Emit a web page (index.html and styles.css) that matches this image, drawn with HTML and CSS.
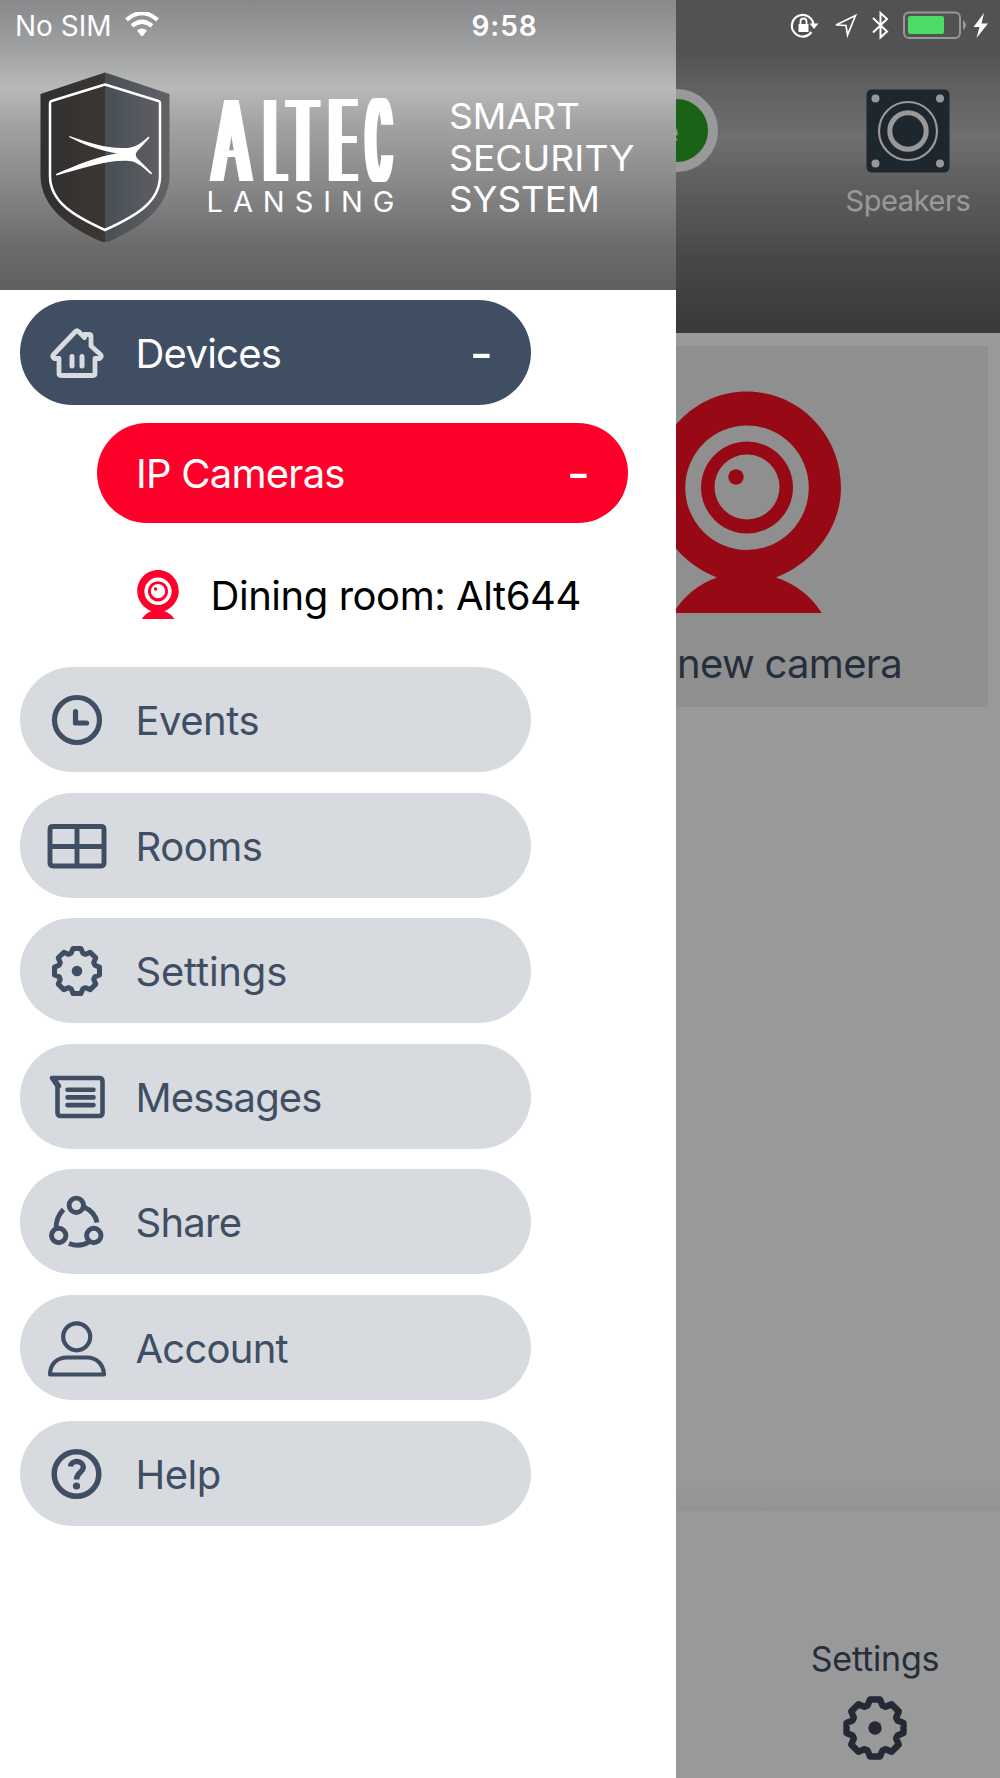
FILE: index.html
```html
<!DOCTYPE html>
<html lang="en">
<head>
<meta charset="utf-8">
<title>Altec Lansing Smart Security System</title>
<link rel="stylesheet" href="styles.css">
</head>
<body>
<svg class="defs" aria-hidden="true">
  <symbol id="camera" viewBox="653 391 188 222">
    <path fill-rule="evenodd" d="M747 391.500c52 0 94 43 94 96 0 40-27 75-65 90 19 6 36 19 46 36H673c10-17 26-30 44-36-38-15-64-50-64-90 0-53 42-96 94-96zM747 425.500a61.500 62 0 1 0 0 124.500 61.500 62 0 1 0 0-124.500zM747 441.500a46 46 0 1 1 0 92 46 46 0 1 1 0-92zM747 454.500a32.500 32.500 0 1 0 0 65 32.500 32.500 0 1 0 0-65z"/>
    <circle cx="736" cy="477" r="7.700"/>
  </symbol>
  <symbol id="gear" viewBox="-32 -32 64 64">
    <path fill="none" stroke="currentColor" stroke-width="6.500" stroke-linejoin="round" d="M-7.500-22.500L-5-28.500H5L7.500-22.500 10.600-21.200 16.600-23.700 23.700-16.600 21.200-10.600 22.500-7.500 28.500-5V5L22.500 7.500 21.200 10.600 23.700 16.600 16.600 23.700 10.600 21.200 7.500 22.500 5 28.500H-5L-7.500 22.500-10.600 21.200-16.600 23.700-23.700 16.600-21.200 10.600-22.500 7.500-28.500 5V-5L-22.500-7.500-21.200-10.600-23.700-16.600-16.600-23.700-10.600-21.200Z"/>
    <circle r="6.700" fill="currentColor"/>
  </symbol>
</svg>

<div class="screen">
  <div class="app">
    <header class="app-header">
      <div class="live">Live</div>
      <div class="speakers">
        <svg width="84" height="84" viewBox="0 0 84 84">
          <rect x=".5" y=".5" width="83" height="83" rx="5" fill="#32404e"/>
          <g fill="#fff"><circle cx="9.500" cy="9.500" r="4"/><circle cx="74" cy="9.500" r="4"/><circle cx="9.500" cy="74.500" r="4"/><circle cx="74" cy="74.500" r="4"/></g>
          <g fill="none" stroke="#fff"><circle cx="42" cy="42" r="29" stroke-width="2.200"/><circle cx="42" cy="42" r="18.200" stroke-width="5"/></g>
        </svg>
        <span class="speakers-label">Speakers</span>
      </div>
    </header>
    <main class="app-main">
      <section class="card">
        <svg class="card-camera" width="188" height="222"><use href="#camera"/></svg>
        <span class="card-label">Add new camera</span>
      </section>
    </main>
    <footer class="app-footer">
      <div class="tab tab-left"><span>Events</span></div>
      <div class="tab">
        <span>Settings</span>
        <svg class="tab-gear" width="64" height="64"><use href="#gear"/></svg>
      </div>
    </footer>
  </div>
  <div class="scrim"></div>

  <aside class="drawer">
    <header class="drawer-header">
      <svg class="brand" width="600" height="172" viewBox="40 72 600 172">
        <defs>
          <linearGradient id="left"><stop stop-color="#303030"/><stop offset="1" stop-color="#3b3633"/></linearGradient>
          <linearGradient id="right"><stop stop-color="#464f55"/><stop offset="1" stop-color="#636166"/></linearGradient>
          <filter id="widen" x="-10%" y="-10%" width="120%" height="120%"><feMorphology operator="dilate" radius="5 0"/></filter>
        </defs>
        <path fill="url(#left)" d="M105 72.500L40.500 94V176C41 207 68 227 101 241.500Q103 242 105 242Z"/>
        <path fill="url(#right)" d="M105 72.500L169.500 94V176C169 207 142 227 109 241.500Q107 242 105 242Z"/>
        <path fill="none" stroke="#fff" stroke-width="2.500" stroke-linejoin="round" d="M105 84.500L158.500 101Q160 101.500 160 103V176C160 202 136 216 105 230C74 216 50 202 50 176V103Q50 101.500 51.500 101Z"/>
        <path fill="#fff" d="M69.500 136C90 143 106 148.500 124 148C134 148 138 146 148.500 136.500Q150 137 149 138.500L137 151.500Q134.500 154.500 137 158L152 173Q152 174.500 150.500 174C142 166 136 161.500 129 161C109 159.500 84 168 56.500 175.500Q55 174.500 57 173.500C77 165 98 156 117 153.500C101 151 82 144 69 137Z"/>
        <g class="brand-name" filter="url(#widen)">
          <text transform="translate(213 181) scale(.49 1)">A</text>
          <text transform="translate(265.500 181) scale(.31 1)">L</text>
          <text transform="translate(287.600 181) scale(.43 1)">T</text>
          <text transform="translate(329.500 181) scale(.4 1)">E</text>
          <text transform="translate(367.500 181) scale(.28 1)">C</text>
        </g>
        <text class="brand-text" x="206.500" y="212" font-size="29" textLength="188">LANSING</text>
        <text class="brand-text" x="449" y="129" font-size="35.500" textLength="131" lengthAdjust="spacingAndGlyphs">SMART</text>
        <text class="brand-text" x="449" y="170.500" font-size="35.500" textLength="185.500" lengthAdjust="spacingAndGlyphs">SECURITY</text>
        <text class="brand-text" x="449" y="212" font-size="35.500" textLength="151" lengthAdjust="spacingAndGlyphs">SYSTEM</text>
      </svg>
    </header>

    <nav class="menu">
      <div class="item item-active">
        <svg class="icon" viewBox="-30 -30 60 60"><path stroke-width="4.800" d="M-18 5.500H-22.500Q-25.500 4-23.500 1.500L-1.500-21.500Q0-23 1.500-21.500L7.500-15.500V-18.500H12Q14-18.500 14-16.500V-7L23.500 1.500Q25.500 4 22.500 5.500H18V20.500Q18 22.500 16 22.500H-16Q-18 22.500-18 20.500Z"/><path stroke-width="5" d="M-5 3.500V13M5 3.500V13"/></svg>
        <span class="snug">Devices</span><b>-</b>
      </div>
      <div class="item item-sub"><span class="snug">IP Cameras</span><b>-</b></div>
      <div class="device">
        <svg class="device-icon" width="42" height="49"><use href="#camera"/></svg>
        <span>Dining room: Alt644</span>
      </div>
      <div class="item">
        <svg class="icon" viewBox="-30 -30 60 60"><circle r="22.500"/><path d="M-1.500-8.500V3H9.500"/></svg>
        <span>Events</span>
      </div>
      <div class="item">
        <svg class="icon" viewBox="-30 -30 60 60"><path stroke-width="4.900" d="M-24-19.500H24Q27-19.500 27-16.500V17Q27 20 24 20H-24Q-27 20-27 17V-16.500Q-27-19.500-24-19.500ZM0-19V20M-27 .5H27"/></svg>
        <span>Rooms</span>
      </div>
      <div class="item">
        <svg class="icon" viewBox="-38 -38 76 76"><use href="#gear" x="-32" y="-32" width="64" height="64"/></svg>
        <span class="loose">Settings</span>
      </div>
      <div class="item">
        <svg class="icon" viewBox="-30 -30 60 60"><path stroke-width="4.600" d="M-25-19H22Q25.500-19 25.500-15.500V15.500Q25.500 19 22 19H-16Q-19.500 19-19.500 15.500V-11ZM-22-17L-18-11M-9.500-7.200H16.500M-9.500 .4H16.500M-9.500 8.100H16.500"/></svg>
        <span class="tight">Messages</span>
      </div>
      <div class="item">
        <svg class="icon" viewBox="-30 -30 60 60"><g stroke-width="4.900"><circle cx="-.7" cy="-16.700" r="7.200"/><circle cx="-18.300" cy="13.500" r="7.200"/><circle cx="16.800" cy="13.500" r="7.200"/><path stroke-linecap="butt" d="M-21 6.500Q-21-5-13.500-12.500M7-15Q18-10 20 .5M-8 21.500Q3 26 12.500 19.500"/></g></svg>
        <span class="snug">Share</span>
      </div>
      <div class="item">
        <svg class="icon" viewBox="-30 -30 60 60"><g stroke-width="4.200"><circle cx="-.3" cy="-11.200" r="13.500"/><path d="M-27 26.500H27C26.500 15 18.500 9.500 10 9.500H-10C-19 9.500-27 15-27 26.500Z"/></g></svg>
        <span class="snug">Account</span>
      </div>
      <div class="item">
        <svg class="icon" viewBox="-30 -30 60 60"><circle cx="-.5" r="22.300" stroke-width="5.500"/><path stroke-width="5.400" stroke-linecap="butt" d="M-6.500-7.500C-6-14.500 6.500-14 6.300-6.500C6-2-.5-1-.5 5.500"/><circle class="dot" cx="-.5" cy="12" r="3.600"/></svg>
        <span>Help</span>
      </div>
    </nav>
  </aside>

  <div class="status">
    <span>No SIM</span>
    <svg class="wifi" width="34" height="25" viewBox="0 0 34 25" fill="none" stroke="#fff"><path stroke-width="4.200" d="M1.500 7.800Q17-5.500 32.500 7.800"/><path stroke-width="4.200" d="M7 13.900Q17 5.500 27 13.900"/><path fill="#fff" stroke="none" d="M12 18.500Q17 14.500 22 18.500L18 23.700Q17 24.500 16 23.700Z"/></svg>
    <span class="clock">9:58</span>
    <svg class="tray" width="200" height="32" viewBox="788 8 200 32" fill="none" stroke="#fff">
      <path stroke-width="2.200" d="M813.500 24.500A10.800 10.800 0 1 0 811.500 31"/><path fill="#fff" stroke="none" d="M809.500 22.500H818.500L814 28ZM798.500 23H808.500V31H798.500Z"/><path stroke-width="1.800" d="M800.500 23.500V20.500Q800.500 17.500 803.500 17.500T806.500 20.500V23.500"/>
      <path stroke-width="1.700" d="M836 24L855.500 14.500 847.500 34 846 24.500Z"/>
      <path stroke-width="2" d="M873 17L887 30.500 880.500 36.500V12L887 18 873 31.500"/>
      <rect x="904" y="11.500" width="56" height="25.500" rx="5" stroke="#98989a" stroke-width="2"/>
      <path fill="#98989a" stroke="none" d="M963 19Q966 21 966 24T963 29Z"/>
      <rect x="908" y="15" width="36" height="18" rx="2" fill="#4cdb64" stroke="none"/>
      <path fill="#fff" stroke="none" d="M984 12L973.500 26H979.500L976.500 37 988 22.500H981.500Z"/>
    </svg>
  </div>
</div>
</body>
</html>
```
FILE: styles.css
```css
* { box-sizing: border-box; }
body { margin: 0; font-family: Inter, "Liberation Sans", sans-serif; }
.defs { position: absolute; width: 0; height: 0; }
.screen { position: relative; width: 1000px; height: 1778px; overflow: hidden; }

/* dimmed page behind the drawer */
.app { height: 100%; display: flex; flex-direction: column; background: #fff; }
.app-header {
  height: 333px; padding: 89px 0 0 578px; display: flex; align-items: flex-start; justify-content: space-between;
  background: linear-gradient(#88898c 0, #88898c 50px, #9e9f9e 84px, #b9b9b9 137px, #a0a0a0 180px, #777 260px, #5f5f5f 333px);
}
.live {
  width: 140px; height: 83px; border: 10px solid #fff; border-radius: 42px; background: #2ca324;
  color: #fff; font-size: 30px; line-height: 67px; text-align: right; padding-right: 29px;
}
.speakers { width: 184px; display: flex; flex-direction: column; align-items: center; color: #fff; }
.speakers-label { margin-top: 9px; font-size: 29px; line-height: 38px; letter-spacing: -.4px; }
.app-main { flex: 1; padding: 13px 12px; background: linear-gradient(#fff calc(100% - 30px), #f6f6f6); }
.card {
  width: 482px; height: 361px; margin-left: auto; background: #efefef; color: #3f4e63;
  display: flex; flex-direction: column; align-items: center; padding-top: 45px;
}
.card-camera { fill: #fd1026; }
.card-label { margin-top: 25px; font-size: 40px; line-height: 52px; letter-spacing: -.7px; }
.app-footer { height: 267px; padding: 130px 15px 0 0; display: flex; justify-content: flex-end; background: #fff; }
.tab { width: 220px; display: flex; flex-direction: column; align-items: center; font-size: 34px; line-height: 36px; letter-spacing: -.2px; color: #3c4c60; }
.tab-left { align-items: flex-end; width: 140px; margin-right: 88px; }
.tab-gear { margin-top: 19px; color: #3e4459; }
.scrim { position: absolute; inset: 0; background: rgba(0, 0, 0, .4); }

/* drawer */
.drawer { position: absolute; inset: 0 auto 0 0; width: 676px; background: #fff; }
.drawer-header {
  height: 290px; padding: 72px 0 0 40px;
  background: linear-gradient(#88898b 0, #9b9c9d 40px, #abadab 68px, #b9b9b9 88px, #a2a2a2 125px, #888 185px, #6c6c6c 245px, #5f5f5f 290px);
}
.brand { display: block; }
.brand-name { fill: #fff; font-size: 112px; font-weight: 300; }
.brand-text { fill: #fff; font-weight: 400; }
.menu {
  padding: 9.500px 0 0 19.500px; display: flex; flex-direction: column; gap: 20.650px;
  font-size: 40px; line-height: 52px; letter-spacing: -.5px;
}
.item {
  width: 511.500px; height: 105px; border-radius: 53px; padding: 0 41px 0 27.500px; display: flex; align-items: center;
  background: #d7dadf; color: #3f4e63;
}
.item span { margin-left: 28.500px; padding-top: 3px; }
.item b { margin-left: auto; font-weight: 600; padding-top: 3px; transform: scaleX(1.25); }
.tight { letter-spacing: -.9px; }
.snug { letter-spacing: -.75px; }
.loose { letter-spacing: -.2px; }
.icon { width: 60px; height: 60px; margin-top: 1px; fill: none; stroke: currentColor; stroke-width: 5.200; stroke-linecap: round; stroke-linejoin: round; }
.icon use { stroke: none; }
.dot { fill: currentColor; stroke: none; }
.item-active { background: #3f4e63; color: #fff; }
.item-active .icon { color: #d8dbe0; }
.item-sub { width: 531px; height: 100.500px; margin: -2.500px 0 0 77.500px; padding-left: 10.500px; background: #ff002b; color: #fff; }
.device { height: 102.500px; padding-left: 117.500px; display: flex; align-items: center; gap: 31.500px; color: #000; letter-spacing: -.45px; }
.device span { padding-top: 1px; }
.device-icon { fill: #ff002b; margin-bottom: 2px; }

/* status bar */
.status { position: absolute; inset: 0 0 auto 0; height: 51px; color: #fff; display: flex; align-items: center; padding: 0 12px 0 15px; font-size: 28px; }
.wifi { margin: 0 0 2px 13px; }
.clock { margin-left: 313px; font-weight: 600; letter-spacing: .9px; }
.tray { margin: 0 0 2px auto; }
```
